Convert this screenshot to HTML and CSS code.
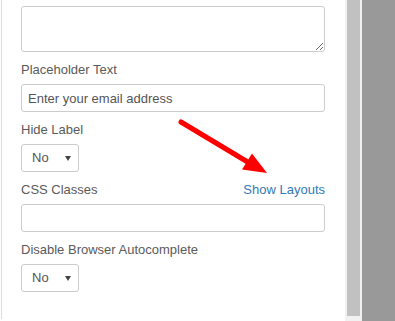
FILE: index.html
```html
<!DOCTYPE html>
<html lang="en">
<head>
  <link rel="stylesheet" href="styles.css">
</head>
<body>
<div class="frame">
  <div class="panel">
    <div class="group">
      <textarea class="field area"></textarea>
    </div>
    <div class="group">
      <label class="label">Placeholder Text</label>
      <input class="field" type="text" value="Enter your email address">
    </div>
    <div class="group">
      <label class="label">Hide Label</label>
      <div class="select">No</div>
    </div>
    <div class="group">
      <div class="label-row">
        <label class="label">CSS Classes</label>
        <a class="link" href="#">Show Layouts</a>
      </div>
      <input class="field" type="text">
    </div>
    <div class="group">
      <label class="label">Disable Browser Autocomplete</label>
      <div class="select">No</div>
    </div>

    <!-- red arrow pointing at the link -->
    <svg class="arrow" width="100" height="70" viewBox="170 110 100 70">
      <line x1="180" y1="122" x2="250" y2="164" stroke="#ff0000" stroke-width="5" stroke-linecap="round"/>
      <polygon points="266,173 241,169.5 251,153.5" fill="#ff0000"/>
    </svg>
  </div>
  <div class="scrollbar">
    <div class="thumb"></div>
  </div>
  <div class="side"></div>
</div>
</body>
</html>
```

FILE: styles.css
```css
body {
  margin: 0;
  font-family: "Liberation Sans", Arial, sans-serif;
  background: #fff;
}

.frame {
  display: flex;
  height: 321px;
}

.panel {
  position: relative;
  width: 344px;
  height: 319px;
  margin-left: 1px;
  box-sizing: border-box;
  border-left: 1px solid #ddd;
  padding: 6px 20px 0 19px;
  background: #fff;
}

.group {
  margin-bottom: 8px;
}

.label {
  display: block;
  font-size: 13px;
  line-height: 20px;
  color: #5a5a5a;
  margin-bottom: 4px;
}

.label-row {
  display: flex;
  justify-content: space-between;
  align-items: baseline;
}

.link {
  font-size: 13px;
  line-height: 20px;
  color: #337ab7;
  text-decoration: none;
}

.field {
  display: block;
  width: 100%;
  height: 28px;
  box-sizing: border-box;
  border: 1px solid #ccc;
  border-radius: 3px;
  padding: 0 6px;
  font-family: "Liberation Sans", Arial, sans-serif;
  font-size: 13px;
  color: #555;
  background: #fff;
  margin: 0;
}

.area {
  height: 46px;
  resize: vertical;
}

.select {
  position: relative;
  width: 58px;
  height: 28px;
  box-sizing: border-box;
  border: 1px solid #ccc;
  border-radius: 3px;
  padding-left: 10px;
  font-size: 13px;
  line-height: 26px;
  color: #555;
}

.select:after {
  content: "";
  position: absolute;
  right: 7px;
  top: 11px;
  border-left: 3px solid transparent;
  border-right: 3px solid transparent;
  border-top: 5px solid #444;
}

.arrow {
  position: absolute;
  left: 169px;
  top: 110px;
}

.scrollbar {
  width: 17px;
  background: #f1f1f1;
}

.thumb {
  height: 316px;
  margin: 0 2px;
  background: #c1c1c1;
}

.side {
  flex: 1;
  background: #999;
}
```
